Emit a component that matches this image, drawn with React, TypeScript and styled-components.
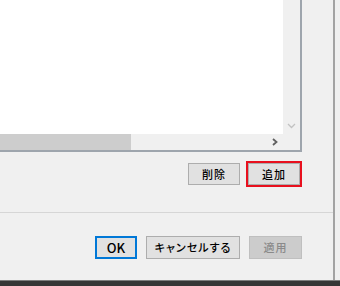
import React from 'react';
import styled, { createGlobalStyle } from 'styled-components';

const GlobalStyle = createGlobalStyle`
  html, body {
    margin: 0;
    padding: 0;
    background: #f0f0f0;
    font-family: "Noto Sans CJK JP", "Noto Sans", sans-serif;
    overflow: hidden;
  }
`;

const Screen = styled.div`
  width: 340px;
  height: 286px;
  display: flex;
  flex-direction: column;
  background: #f0f0f0;
`;

const Frame = styled.div`
  width: 335px;
  height: 280px;
  box-sizing: border-box;
  border-right: 2px solid #a3a3a3;
  display: flex;
  flex-direction: column;
`;

const TopSection = styled.div`
  height: 212px;
  display: flex;
  flex-direction: column;
`;

const ListBox = styled.div`
  width: 302px;
  height: 152px;
  box-sizing: border-box;
  border-right: 2px solid #9ea5ad;
  border-bottom: 2px solid #9ea5ad;
  display: grid;
  grid-template-columns: 283px 17px;
  grid-template-rows: 134px 16px;
`;

const ListContent = styled.div`
  background: #ffffff;
`;

const VScroll = styled.div`
  background: #f0f0f0;
  display: flex;
  flex-direction: column;
  justify-content: flex-end;
`;

const HScroll = styled.div`
  background: #f0f0f0;
  display: flex;
  align-items: stretch;
`;

const Thumb = styled.div`
  width: 131px;
  background: #cdcdcd;
`;

const Track = styled.div`
  flex: 1;
`;

const Corner = styled.div`
  background: #f0f0f0;
`;

const ArrowButton = styled.div<{ $w: number; $h: number }>`
  width: ${(p) => p.$w}px;
  height: ${(p) => p.$h}px;
  display: flex;
  align-items: center;
  justify-content: center;
`;

const ButtonRow = styled.div<{ $top: number; $right: number; $gap: number }>`
  display: flex;
  justify-content: flex-end;
  gap: ${(p) => p.$gap}px;
  margin-top: ${(p) => p.$top}px;
  padding-right: ${(p) => p.$right}px;
`;

const Button = styled.div<{
  $w: number;
  $h: number;
  $variant?: 'default' | 'disabled';
  $highlight?: boolean;
  $latin?: boolean;
}>`
  width: ${(p) => p.$w}px;
  height: ${(p) => p.$h}px;
  box-sizing: border-box;
  display: flex;
  align-items: center;
  justify-content: center;
  background: ${(p) => (p.$variant === 'disabled' ? '#cccccc' : '#e1e1e1')};
  border: ${(p) =>
    p.$variant === 'default'
      ? '2px solid #0078d7'
      : p.$variant === 'disabled'
      ? '1px solid #bfbfbf'
      : '1px solid #adadad'};
  color: ${(p) => (p.$variant === 'disabled' ? '#8a8a8a' : '#000000')};
  font-size: ${(p) => (p.$latin ? '13px' : '11px')};
  font-weight: 500;
  letter-spacing: ${(p) => (p.$latin ? '0' : '1px')};
  font-feature-settings: "palt";
  line-height: 1;
  outline: ${(p) => (p.$highlight ? '2px solid #e8101e' : 'none')};
  outline-offset: 0;
`;

const Footer = styled.div`
  flex: 1;
  border-top: 1px solid #d6d6d6;
  display: flex;
  flex-direction: column;
`;

const TaskBar = styled.div`
  flex: 1;
  background: #363636;
  border-top: 1px solid #7d7d7d;
`;

const ChevronRight = () => (
  <svg width="6" height="8" viewBox="0 0 6 8">
    <path d="M1 1 L4.5 4 L1 7" fill="none" stroke="#606060" strokeWidth="1.8" />
  </svg>
);

const ChevronDown = () => (
  <svg width="9" height="6" viewBox="0 0 9 6">
    <path d="M1 1 L4.5 4.5 L8 1" fill="none" stroke="#c2c2c2" strokeWidth="1.3" />
  </svg>
);

export default function App() {
  return (
    <>
      <GlobalStyle />
      <Screen>
        <Frame>
          <TopSection>
            <ListBox>
              <ListContent />
              <VScroll>
                <ArrowButton $w={17} $h={17}>
                  <ChevronDown />
                </ArrowButton>
              </VScroll>
              <HScroll>
                <Thumb />
                <Track />
                <ArrowButton $w={17} $h={16}>
                  <ChevronRight />
                </ArrowButton>
              </HScroll>
              <Corner />
            </ListBox>
            <ButtonRow $top={11} $right={33} $gap={8}>
              <Button $w={52} $h={22}>削除</Button>
              <Button $w={52} $h={22} $highlight>
                追加
              </Button>
            </ButtonRow>
          </TopSection>
          <Footer>
            <ButtonRow $top={23} $right={31} $gap={9}>
              <Button $w={42} $h={23} $variant="default" $latin>
                OK
              </Button>
              <Button $w={94} $h={23}>キャンセルする</Button>
              <Button $w={53} $h={23} $variant="disabled">
                適用
              </Button>
            </ButtonRow>
          </Footer>
        </Frame>
        <TaskBar />
      </Screen>
    </>
  );
}
